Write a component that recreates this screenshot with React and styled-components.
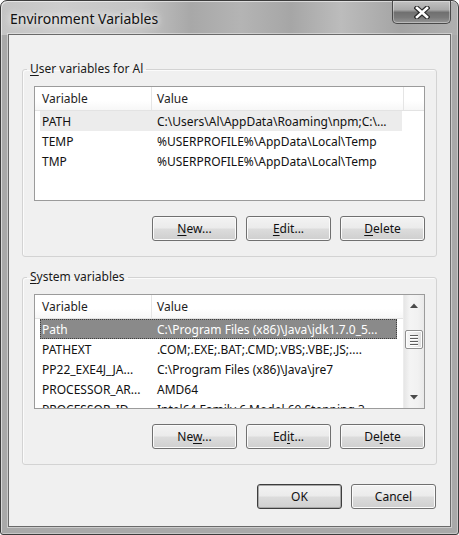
import React from 'react';
import styled, { createGlobalStyle } from 'styled-components';

const Global = createGlobalStyle`
  html, body { margin: 0; padding: 0; background: #fff; }
  body { font-family: "Noto Sans", "Open Sans", sans-serif; font-size: 12px; color: #000; }
  * { box-sizing: border-box; }
`;

const Window = styled.div`
  width: 459px;
  height: 535px;
  border: 1px solid #3c3c3c;
  border-radius: 7px 7px 3px 3px;
  padding: 0 7px 7px;
  display: flex;
  flex-direction: column;
  overflow: hidden;
  background:
    linear-gradient(to bottom, rgba(255,255,255,0) 0px, rgba(255,255,255,0) 34px, #a9a9a9 34px),
    linear-gradient(to right, #c4c4c4 0px, #cdcdcd 60px, #c3c3c3 140px, #a8a8a8 190px, #b4b4b4 240px, #a6a6a6 290px, #bcbcbc 340px, #a4a4a4 400px, #b0b0b0 459px);
  box-shadow: inset 1px 1px 0 rgba(255,255,255,0.55), inset -1px -1px 0 rgba(255,255,255,0.35);
`;

const TitleBar = styled.div`
  height: 33px;
  display: flex;
  justify-content: space-between;
  align-items: flex-start;
  flex: none;
`;

const Title = styled.div`
  padding: 8px 0 0 2px;
  font-size: 14px;
  line-height: 20px;
  color: #111;
  text-shadow: 0 0 6px rgba(255,255,255,0.9), 0 0 12px rgba(255,255,255,0.8);
`;

const CloseButton = styled.div`
  width: 59px;
  height: 23px;
  border: 1px solid #4a4a4a;
  border-top: none;
  border-radius: 0 0 5px 5px;
  background: linear-gradient(to bottom, #c2c2c2 0%, #a9a9a9 40%, #707070 52%, #7a7a7a 75%, #979797 100%);
  box-shadow: inset 0 0 0 1px rgba(255,255,255,0.35);
  display: flex;
  align-items: center;
  justify-content: center;
`;

const Client = styled.div`
  flex: 1;
  background: #f0f0f0;
  border: 1px solid #6a6a6a;
  box-shadow: 0 0 0 1px rgba(255,255,255,0.4);
  padding: 0 13px;
  display: flex;
  flex-direction: column;
`;

const Group = styled.fieldset`
  margin: ${p => p.$top}px 0 0;
  border: 1px solid #d3d3d3;
  border-radius: 3px;
  padding: 9px 11px 15px;
  min-width: 0;
  box-shadow: inset 1px 1px 0 #fbfbfb;
`;

const Legend = styled.legend`
  margin-left: -7px;
  padding: 0 3px;
  line-height: 16px;
  font-size: 12px;
  color: #1a1a1a;
`;

const U = styled.span`
  text-decoration: underline;
  text-underline-offset: 2px;
`;

const ListView = styled.div`
  height: 115px;
  border: 1px solid #9b9b9b;
  background: #fff;
  display: flex;
  overflow: hidden;
`;

const ListBody = styled.div`
  flex: 1;
  min-width: 0;
  overflow: hidden;
`;

const Header = styled.div`
  height: 24px;
  display: flex;
  border-bottom: 1px solid #e3e3e3;
  background: linear-gradient(to bottom, #ffffff 0%, #ffffff 60%, #f7f7f7 100%);
`;

const HeaderCell = styled.div`
  width: ${p => (p.$w ? `${p.$w}px` : 'auto')};
  flex: ${p => (p.$w ? 'none' : '1')};
  padding: 1px 0 0 ${p => p.$pad}px;
  line-height: 22px;
  border-right: ${p => (p.$last ? 'none' : '1px solid #e5e5e5')};
  color: #1e1e1e;
  white-space: nowrap;
`;

const Row = styled.div`
  width: ${p => p.$w}px;
  margin-left: 5px;
  height: 20px;
  padding-top: 1px;
  display: flex;
  align-items: center;
  white-space: nowrap;
  background: ${p => (p.$selected ? '#8a8a8a' : p.$hot ? '#ececec' : 'transparent')};
  color: ${p => (p.$selected ? '#fff' : '#111')};
  border: 1px ${p => (p.$selected ? 'dotted #3e3e3e' : 'solid transparent')};
`;

const NameCell = styled.div`
  width: 111px;
  flex: none;
  padding-left: 1px;
  overflow: hidden;
`;

const ValueCell = styled.div`
  flex: 1;
  padding-left: 5px;
  overflow: hidden;
`;

const ScrollBar = styled.div`
  width: 21px;
  flex: none;
  display: flex;
  flex-direction: column;
  border-left: 1px solid #ececec;
  background: linear-gradient(to right, #e6e6e6 0%, #f4f4f4 30%, #f1f1f1 70%, #e9e9e9 100%);
`;

const Arrow = styled.div`
  height: 21px;
  flex: none;
  display: flex;
  align-items: center;
  justify-content: center;
`;

const Track = styled.div`
  flex: 1;
  display: flex;
  flex-direction: column;
  align-items: center;
`;

const Thumb = styled.div`
  width: 18px;
  height: 19px;
  border: 1px solid #8f8f8f;
  border-radius: 2px;
  background: linear-gradient(to right, #f7f7f7 0%, #ececec 50%, #dcdcdc 100%);
  box-shadow: inset 0 0 0 1px #fdfdfd;
  display: flex;
  flex-direction: column;
  align-items: center;
  justify-content: center;
  gap: 2px;
`;

const Grip = styled.div`
  width: 8px;
  height: 1px;
  background: #5e5e5e;
  box-shadow: 0 1px 0 #ffffff;
`;

const ButtonRow = styled.div`
  display: flex;
  justify-content: flex-end;
  gap: 9px;
  margin-top: ${p => p.$top || 15}px;
  padding-right: ${p => p.$right || 0}px;
`;

const Button = styled.button`
  width: 85px;
  height: 25px;
  padding: 0;
  border: 1px solid ${p => (p.$default ? '#3d3d3d' : '#707070')};
  border-radius: 3px;
  background: linear-gradient(to bottom, #f3f3f3 0%, #ebebeb 48%, #dcdcdc 52%, #cfcfcf 100%);
  box-shadow: inset 0 0 0 1px ${p => (p.$default ? '#a8a8a8' : '#fbfbfb')};
  font-family: "Noto Sans", "Open Sans", sans-serif;
  font-size: 12px;
  color: #111;
  line-height: 20px;
`;

const CloseIcon = () => (
  <svg width="16" height="13" viewBox="0 0 16 13">
    <path d="M3 2 L13 11 M13 2 L3 11" stroke="#2e2e2e" strokeWidth="5" strokeLinecap="square" />
    <path d="M3 2 L13 11 M13 2 L3 11" stroke="#ffffff" strokeWidth="2.6" strokeLinecap="square" />
  </svg>
);

const UpTri = () => (
  <svg width="8" height="5" viewBox="0 0 8 5"><path d="M0 5 L4 0.5 L8 5 Z" fill="#4a4a4a" /></svg>
);
const DownTri = () => (
  <svg width="8" height="5" viewBox="0 0 8 5"><path d="M0 0 L4 4.5 L8 0 Z" fill="#4a4a4a" /></svg>
);

const userVars = [
  { name: 'PATH', value: 'C:\\Users\\Al\\AppData\\Roaming\\npm;C:\\...', hot: true },
  { name: 'TEMP', value: '%USERPROFILE%\\AppData\\Local\\Temp' },
  { name: 'TMP', value: '%USERPROFILE%\\AppData\\Local\\Temp' },
];

const sysVars = [
  { name: 'Path', value: 'C:\\Program Files (x86)\\Java\\jdk1.7.0_5...', selected: true },
  { name: 'PATHEXT', value: '.COM;.EXE;.BAT;.CMD;.VBS;.VBE;.JS;....' },
  { name: 'PP22_EXE4J_JA...', value: 'C:\\Program Files (x86)\\Java\\jre7' },
  { name: 'PROCESSOR_AR...', value: 'AMD64' },
  { name: 'PROCESSOR_ID...', value: 'Intel64 Family 6 Model 60 Stepping 3, ...' },
];

function VarList({ rows, scroll, rowWidth }) {
  return (
    <ListView>
      <ListBody>
        <Header>
          <HeaderCell $w={117} $pad={7}>Variable</HeaderCell>
          <HeaderCell $w={scroll ? undefined : 252} $pad={5} $last={scroll}>Value</HeaderCell>
          {!scroll && <HeaderCell $pad={0} $last />}
        </Header>
        {rows.map(r => (
          <Row key={r.name} $w={rowWidth} $hot={r.hot} $selected={r.selected}>
            <NameCell>{r.name}</NameCell>
            <ValueCell>{r.value}</ValueCell>
          </Row>
        ))}
      </ListBody>
      {scroll && (
        <ScrollBar>
          <Arrow><UpTri /></Arrow>
          <Track>
            <Thumb style={{ marginTop: 14 }}>
              <Grip /><Grip /><Grip /><Grip />
            </Thumb>
          </Track>
          <Arrow><DownTri /></Arrow>
        </ScrollBar>
      )}
    </ListView>
  );
}

export default function App() {
  return (
    <>
      <Global />
      <Window>
        <TitleBar>
          <Title>Environment Variables</Title>
          <CloseButton><CloseIcon /></CloseButton>
        </TitleBar>
        <Client>
          <Group $top={26}>
            <Legend><U>U</U>ser variables for Al</Legend>
            <VarList rows={userVars} rowWidth={362} />
            <ButtonRow $top={15}>
              <Button><U>N</U>ew...</Button>
              <Button><U>E</U>dit...</Button>
              <Button><U>D</U>elete</Button>
            </ButtonRow>
          </Group>
          <Group $top={12}>
            <Legend><U>S</U>ystem variables</Legend>
            <VarList rows={sysVars} rowWidth={357} scroll />
            <ButtonRow $top={15}>
              <Button>Ne<U>w</U>...</Button>
              <Button>Ed<U>i</U>t...</Button>
              <Button>De<U>l</U>ete</Button>
            </ButtonRow>
          </Group>
          <ButtonRow $top={19} $right={1}>
            <Button $default>OK</Button>
            <Button>Cancel</Button>
          </ButtonRow>
        </Client>
      </Window>
    </>
  );
}
